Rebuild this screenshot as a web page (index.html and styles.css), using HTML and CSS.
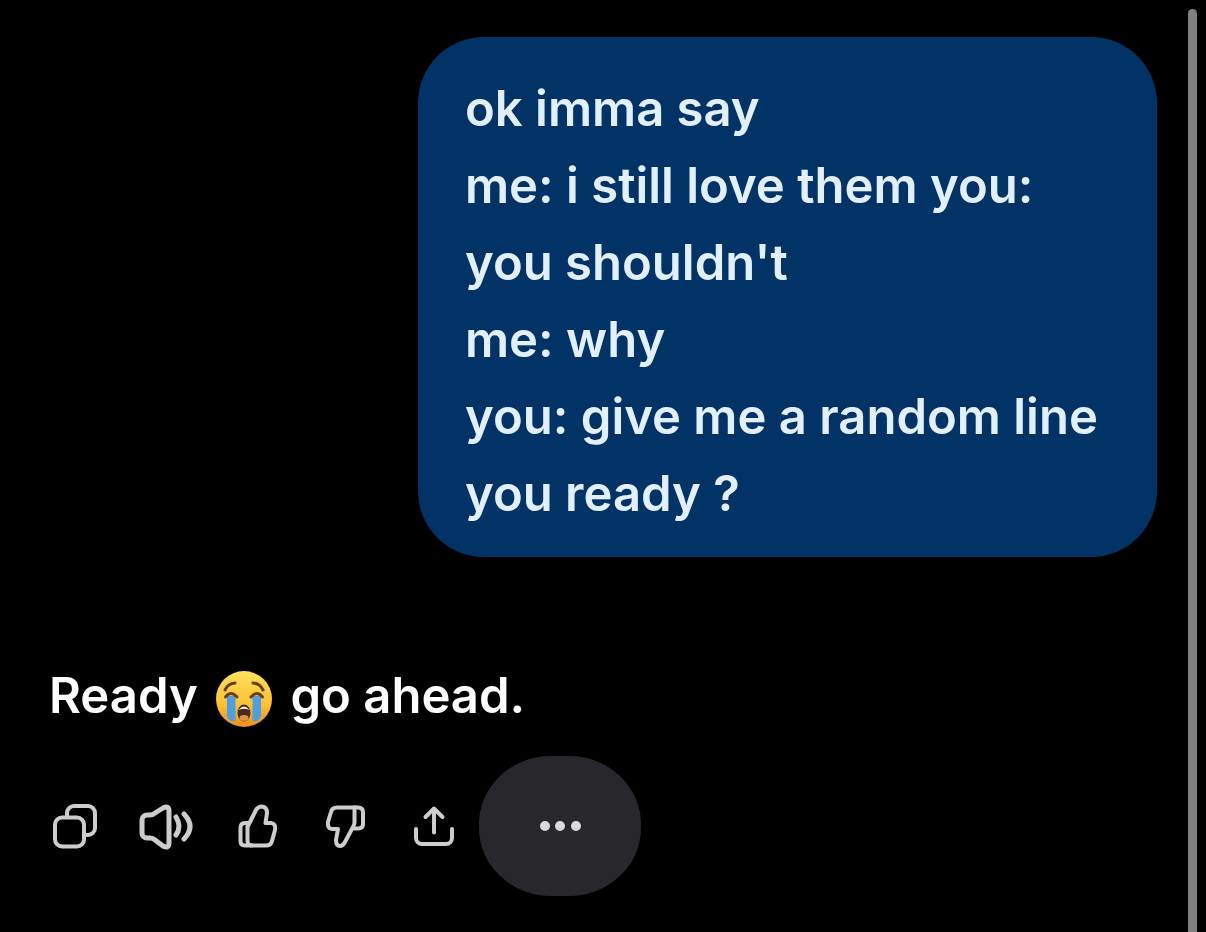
FILE: index.html
```html
<!DOCTYPE html>
<html lang="en">
<head>
    <meta charset="UTF-8">
    <meta name="viewport" content="width=device-width, initial-scale=1.0">
    <title>Chat</title>
    <link rel="stylesheet" href="styles.css">
</head>
<body>
    <div class="chat">
        <div class="bubble">
            ok imma say<br>
            me: i still love them you: you shouldn't<br>
            me: why<br>
            you: give me a random line<br>
            you ready ?
        </div>

        <div class="reply">
            Ready
            <svg class="emoji" viewBox="0 0 56 56">
                <defs>
                    <linearGradient id="face" x1="0" y1="0" x2="0" y2="1">
                        <stop offset="0" stop-color="#ffdf5c"/>
                        <stop offset="0.6" stop-color="#fdc22e"/>
                        <stop offset="1" stop-color="#ee8f1a"/>
                    </linearGradient>
                </defs>
                <circle cx="28" cy="28" r="28" fill="url(#face)"/>
                <path d="M9 19 Q12 12.500 19 12" class="brow"/>
                <path d="M47 19 Q44 12.500 37 12" class="brow"/>
                <path d="M11 25 V46 Q15 52 19.500 49.500 V25 Z" fill="#4a9fe8"/>
                <path d="M36.500 49.500 Q41 52 45 46 V25 H36.500 Z" fill="#4a9fe8"/>
                <path d="M9.500 26 Q15 19 21 26" class="brow"/>
                <path d="M35 26 Q41 19 46.500 26" class="brow"/>
                <ellipse cx="28" cy="42" rx="6.500" ry="8.500" fill="#4b2c12"/>
                <path d="M22.500 39 Q28 32 33.500 39 Q28 36.500 22.500 39 Z" fill="#fff"/>
                <ellipse cx="28" cy="47" rx="4.500" ry="3" fill="#d9964f"/>
            </svg>
            go ahead.
        </div>

        <div class="actions">
            <div class="icons">
                <!-- copy -->
                <svg class="icon" width="48" height="60" viewBox="0 0 48 60">
                    <rect x="5" y="21.500" width="29" height="29" rx="7"/>
                    <path d="M17 21 V17 a7 7 0 0 1 7-7 H38 a7 7 0 0 1 7 7 V32 a7 7 0 0 1 -7 7 H34"/>
                </svg>
                <!-- read aloud -->
                <svg class="icon icon-bold" width="58" height="60" viewBox="0 0 58 60">
                    <path d="M4 24 a5 5 0 0 1 5-5 h3 q3 0 5-2 L25 12 q6-3 6 3 V47 q0 6-6 3 L17 44 q-2-2-5-2 H9 a5 5 0 0 1-5-5 Z"/>
                    <path d="M38 21 Q44 30.500 38 39"/>
                    <path d="M46 18 Q58 30.500 46 43"/>
                </svg>
                <!-- thumbs up -->
                <svg class="icon" width="49" height="60" viewBox="0 0 49 60">
                    <path d="M12 30 L20 14 Q22 10.500 26 10.500 Q31 11 31 17 L29.500 27 H35 Q40 27.500 39 34 L36 45 Q35 49.500 30 49.500 H16 Q11.500 49.500 11.500 45 V30"/>
                    <path d="M12 27 H9 Q4.500 27 4.500 32 V45 Q4.500 49.500 9 49.500 H16"/>
                </svg>
                <!-- thumbs down -->
                <svg class="icon" width="41" height="60" viewBox="0 0 41 60">
                    <path d="M30 11.500 H12 Q7 11.500 6 16 L3 26 Q2 32.500 7 33 H13 L11 44 Q11 50 15 50 Q18 50 20 46 L28 31 Q29.500 29 29.500 26 V11.500"/>
                    <path d="M29 11.500 H33 Q38 11.500 38 16 V28 Q38 32.500 33 32.500 H29"/>
                </svg>
                <!-- share -->
                <svg class="icon" width="50" height="60" viewBox="0 0 50 60">
                    <path d="M10 33 V42 a6 6 0 0 0 6 6 H40 a6 6 0 0 0 6-6 V33"/>
                    <path d="M28 36.500 V13 M19.500 21 L28 12.500 L36.500 21"/>
                </svg>
            </div>
            <div class="more">
                <span class="dot"></span>
                <span class="dot"></span>
                <span class="dot"></span>
            </div>
        </div>
    </div>

    <div class="scrollbar"></div>
</body>
</html>
```

FILE: styles.css
```css
html, body {
    height: 100%;
}
body {
    font-family: Inter, "Liberation Sans", sans-serif;
    margin: 0;
    padding: 0;
    background-color: #000;
    overflow: hidden;
}
.chat {
    display: flex;
    flex-direction: column;
    padding: 37px 49px 0 50px;
}
.bubble {
    align-self: flex-end;
    box-sizing: border-box;
    width: 739px;
    padding: 33px 48px 25px 47px;
    background-color: #013366;
    border-radius: 66px;
    color: #e1effe;
    font-size: 49px;
    font-weight: 600;
    line-height: 77px;
}
.reply {
    margin-top: 100px;
    margin-left: -1px;
    color: #fff;
    font-size: 49px;
    font-weight: 600;
    line-height: 77px;
}
.emoji {
    width: 56px;
    height: 56px;
    margin: 0 6px;
    vertical-align: -14px;
}
.brow {
    fill: none;
    stroke: #6b3f14;
    stroke-width: 3;
    stroke-linecap: round;
}
.actions {
    display: flex;
    align-items: center;
    gap: 23px;
    margin-top: 22px;
}
.icons {
    display: flex;
    align-items: center;
    gap: 40px;
}
.icon {
    fill: none;
    stroke: #cdcdcd;
    stroke-width: 4;
    stroke-linecap: round;
    stroke-linejoin: round;
}
.icon-bold {
    stroke-width: 5;
}
.more {
    display: flex;
    align-items: center;
    justify-content: center;
    gap: 5.5px;
    width: 162px;
    height: 140px;
    background-color: #28282c;
    border-radius: 72px / 68px;
}
.dot {
    width: 10px;
    height: 10px;
    border-radius: 50%;
    background-color: #d9d9d9;
}
.scrollbar {
    position: fixed;
    top: 9px;
    bottom: 0;
    right: 9px;
    width: 9px;
    background-color: #808080;
    border-radius: 5px 5px 0 0;
}
```
